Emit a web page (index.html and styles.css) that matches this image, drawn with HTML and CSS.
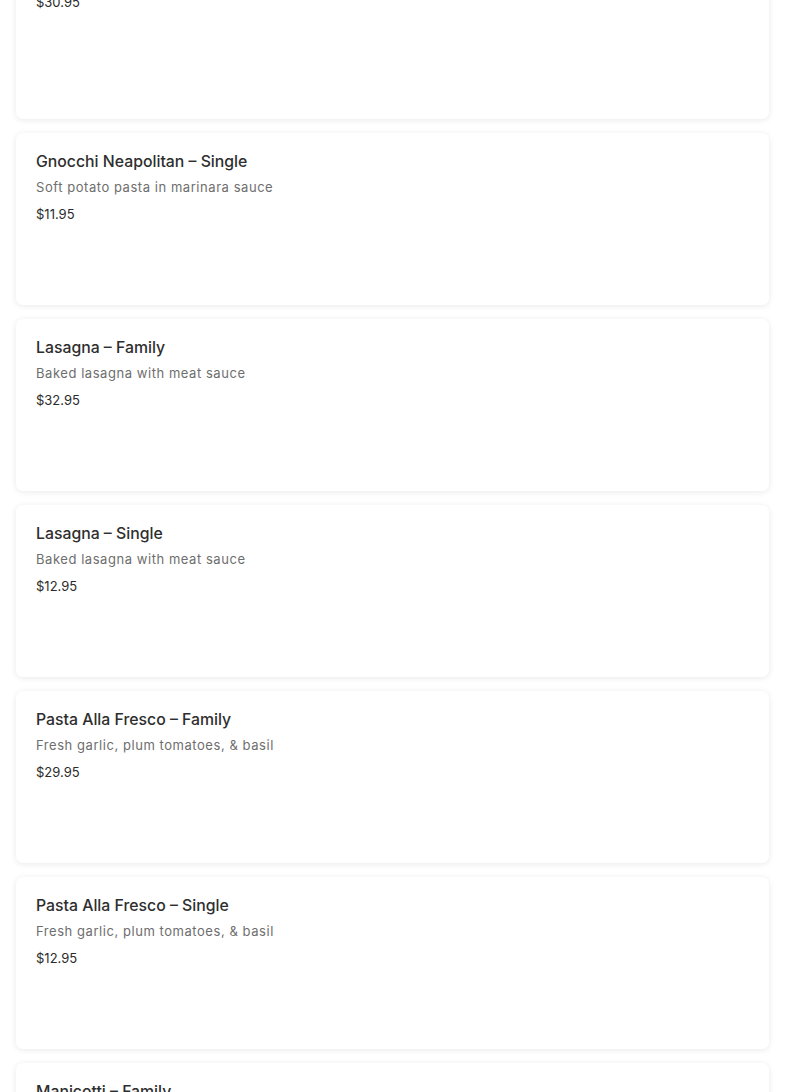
FILE: index.html
```html
<!DOCTYPE html>
<html>
<head>
<meta charset="utf-8">
<link rel="stylesheet" href="styles.css">
</head>
<body>
<div class="list">
  <div class="card card-first">
    <div class="title">Gnocchi Neapolitan – Family</div>
    <div class="desc">Soft potato pasta in marinara sauce</div>
    <div class="price">$30.95</div>
  </div>
  <div class="card">
    <div class="title">Gnocchi Neapolitan – Single</div>
    <div class="desc">Soft potato pasta in marinara sauce</div>
    <div class="price">$11.95</div>
  </div>
  <div class="card">
    <div class="title">Lasagna – Family</div>
    <div class="desc">Baked lasagna with meat sauce</div>
    <div class="price">$32.95</div>
  </div>
  <div class="card">
    <div class="title">Lasagna – Single</div>
    <div class="desc">Baked lasagna with meat sauce</div>
    <div class="price">$12.95</div>
  </div>
  <div class="card">
    <div class="title">Pasta Alla Fresco – Family</div>
    <div class="desc">Fresh garlic, plum tomatoes, &amp; basil</div>
    <div class="price">$29.95</div>
  </div>
  <div class="card">
    <div class="title">Pasta Alla Fresco – Single</div>
    <div class="desc">Fresh garlic, plum tomatoes, &amp; basil</div>
    <div class="price">$12.95</div>
  </div>
  <div class="card">
    <div class="title">Manicotti – Family</div>
    <div class="desc">Pasta tubes stuffed with ricotta cheese</div>
    <div class="price">$29.95</div>
  </div>
</div>
</body>
</html>
```

FILE: styles.css
```css
html, body {
  margin: 0;
  padding: 0;
  background: #ffffff;
  overflow: hidden;
}
body {
  font-family: "Inter", "Liberation Sans", sans-serif;
  color: #2b2b2b;
}
.list {
  display: flex;
  flex-direction: column;
  gap: 14px;
  padding: 0 16px;
  margin-top: -53px;
}
.card {
  background: #fff;
  border-radius: 7px;
  box-shadow: 0 1px 6px rgba(0, 0, 0, 0.09);
  min-height: 172px;
  box-sizing: border-box;
  padding: 19px 20px 18px;
  display: flex;
  flex-direction: column;
}
.card-first {
  padding-top: 0;
  justify-content: flex-start;
}
.card-first .title, .card-first .desc {
  display: none;
}
.card-first .price {
  margin-top: 45px;
}
.title {
  font-size: 15.8px;
  font-weight: 500;
  line-height: 20px;
  color: #2e2e2e;
}
.desc {
  margin-top: 5px;
  font-size: 13px;
  line-height: 20px;
  color: #6e6e6e;
  letter-spacing: 0.55px;
}
.price {
  margin-top: 7px;
  font-size: 13px;
  line-height: 20px;
  color: #2b2b2b;
}
```
